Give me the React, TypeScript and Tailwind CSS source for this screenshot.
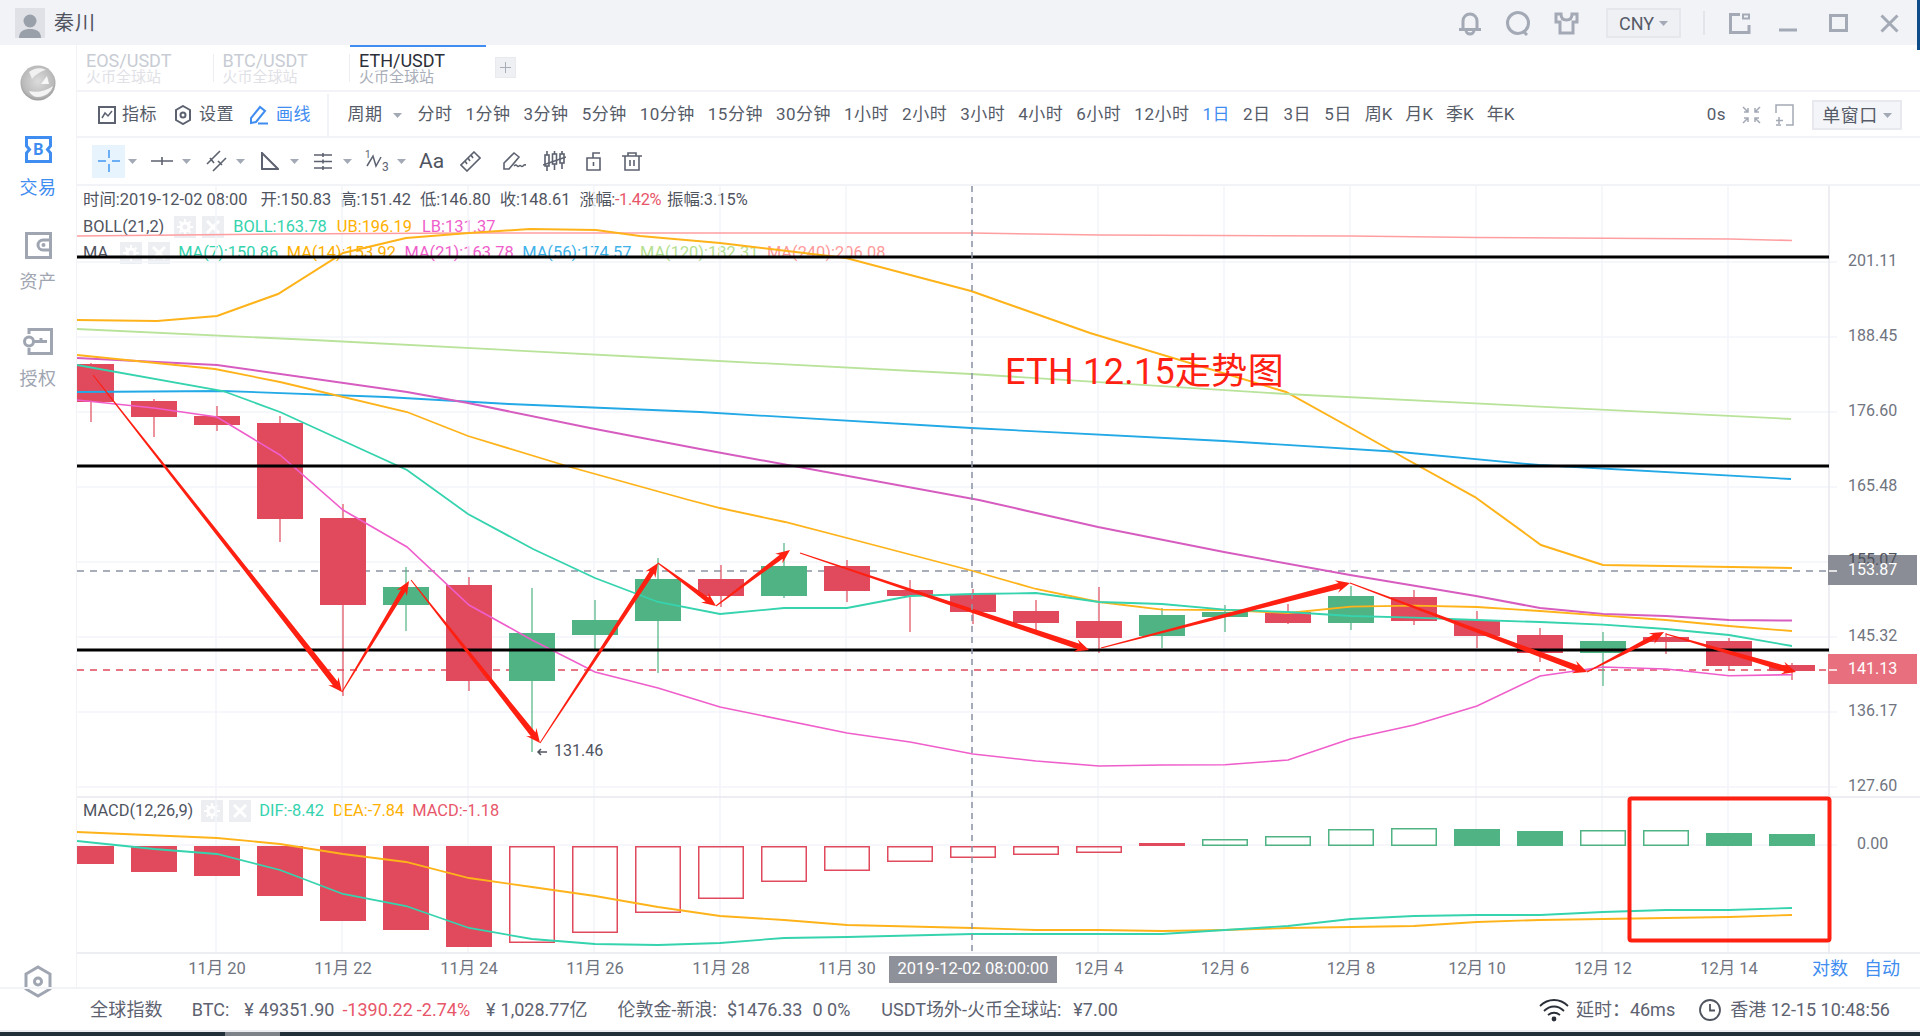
import type { ReactNode } from 'react'

const RED = '#e04a5c'
const GREEN = '#50b383'
const MARK = '#ff2012'

const cx = (i: number) => 91 + 63 * i

// [bodyTop, bodyBottom, wickTop, wickBottom, up]
const CANDLES: [number, number, number, number, boolean][] = [
  [364, 402, 363, 422, false], [401, 417, 399, 437, false], [416, 425, 406, 431, false],
  [423, 519, 416, 542, false], [518, 605, 504, 696, false], [587, 605, 567, 631, true],
  [585, 681, 577, 691, false], [633, 681, 588, 752, true], [620, 635, 600, 650, true],
  [579, 621, 558, 673, true], [579, 596, 565, 607, false], [566, 596, 543, 598, true],
  [566, 591, 560, 602, false], [590, 596, 580, 632, false], [594, 612, 589, 624, false],
  [611, 623, 600, 630, false], [621, 638, 587, 653, false], [615, 636, 608, 648, true],
  [612, 617, 605, 632, true], [612, 623, 604, 624, false], [596, 623, 586, 630, true],
  [597, 621, 590, 625, false], [620, 636, 611, 648, false], [635, 653, 628, 662, false],
  [641, 653, 632, 686, true], [637, 642, 633, 654, false], [641, 666, 638, 670, false],
  [665, 671, 663, 680, false],
]

// [bottom or top edge, filled]; the bars grow from the zero line
const MACD: [number, boolean][] = [
  [864, true], [872, true], [876, true], [896, true], [921, true], [930, true], [947, true],
  [943, false], [933, false], [913, false], [899, false], [882, false], [871, false], [862, false],
  [858, false], [855, false], [853, false], [843, true], [839, false], [836, false], [829, false],
  [828, false], [829, true], [831, true], [830, false], [830, false], [833, true], [834, true],
]

const ZERO = 846

type Series = { color: string; width: number; pts: number[][] }

const LINES: Series[] = [
  { color: '#ff9ea0', width: 1.6, pts: [[77, 236], [280, 234], [469, 233], [800, 233], [972, 233], [1100, 235], [1350, 236], [1476, 237.5], [1730, 239], [1792, 240.5]] },
  { color: '#ffb31a', width: 2, pts: [[77, 320], [157, 321], [217, 316], [278, 294], [343, 253], [406, 238], [469, 233], [530, 229], [596, 230], [640, 236], [720, 243], [846, 258], [971, 291], [1090, 333], [1286, 392], [1351, 428], [1408, 460], [1475, 497], [1541, 545], [1603, 565], [1792, 568]] },
  { color: '#b9e39a', width: 1.8, pts: [[77, 329], [313, 340], [700, 360], [971, 374], [1286, 394], [1791, 419]] },
  { color: '#22a9e6', width: 1.8, pts: [[77, 392], [223, 391], [386, 397], [509, 404], [700, 412], [971, 428], [1224, 441], [1400, 452], [1539, 465], [1791, 479]] },
  { color: '#d65cc0', width: 2, pts: [[77, 358], [217, 365], [407, 392], [468, 403], [590, 428], [700, 449], [979, 500], [1098, 527], [1224, 552], [1350, 575], [1476, 596], [1540, 608], [1603, 614], [1666, 616], [1729, 620], [1792, 620.5]] },
  { color: '#ffb31a', width: 1.8, pts: [[77, 355], [215, 369], [280, 382], [407, 412], [468, 436], [570, 467], [689, 500], [720, 508], [785, 522], [847, 538], [973, 571], [1036, 589], [1099, 602], [1162, 609.7], [1225, 610], [1288, 613], [1351, 606.7], [1414, 605.7], [1477, 607], [1540, 611], [1603, 615.7], [1666, 620], [1729, 626], [1792, 631]] },
  { color: '#35d3ae', width: 1.8, pts: [[77, 365], [223, 391], [280, 412], [407, 470], [468, 514], [533, 549], [595, 578], [658, 602], [720, 614], [784, 608], [847, 608], [910, 596], [973, 594], [1036, 593], [1099, 602], [1162, 604], [1225, 609.7], [1288, 612], [1351, 616], [1414, 617.7], [1477, 620], [1540, 622], [1603, 624.7], [1666, 629], [1729, 635], [1792, 646]] },
  { color: '#ef5ecb', width: 1.6, pts: [[77, 400], [154, 408], [217, 417], [280, 455], [343, 510], [407, 547], [469, 605], [532, 640], [595, 672], [658, 688], [720, 707], [847, 733], [910, 742], [973, 754], [1036, 761], [1099, 766], [1162, 765], [1225, 764.7], [1288, 760], [1350, 739], [1414, 725], [1477, 706], [1540, 676], [1603, 667], [1666, 669], [1729, 675.7], [1792, 674.7]] },
  { color: '#ffb31a', width: 1.8, pts: [[77, 832], [217, 838], [280, 844], [343, 854], [406, 862], [469, 878], [532, 887], [595, 896], [658, 907], [720, 916], [784, 920], [847, 925], [973, 928], [1036, 930], [1099, 930], [1162, 931], [1225, 930], [1288, 928], [1351, 927], [1414, 926], [1477, 922], [1540, 920], [1603, 919], [1729, 917], [1792, 915]] },
  { color: '#35d3ae', width: 1.8, pts: [[77, 841], [154, 849], [217, 854], [280, 870], [343, 894], [406, 906], [469, 928], [532, 939], [595, 944], [658, 945], [720, 943], [784, 938], [847, 937], [973, 934], [1036, 934], [1099, 934], [1162, 934], [1225, 930], [1288, 926], [1351, 919], [1414, 916], [1477, 915], [1540, 915], [1603, 912], [1666, 910], [1729, 910], [1792, 908]] },
]

// hand drawn wave marks: [x1, y1, x2, y2, shaft width at the head]
const ARROWS: number[][] = [
  [93, 375, 342, 692, 6], [342, 692, 409, 581, 5], [411, 580, 540, 743, 6], [540, 743, 658, 563, 5],
  [658, 563, 716, 606, 5], [716, 606, 790, 550, 5], [800, 553, 1089, 650, 6], [1101, 648, 1350, 583, 6],
  [1350, 583, 1587, 672, 6], [1587, 672, 1664, 632, 5], [1666, 634, 1796, 672, 6],
]

const PRICE_TICKS: [string, number][] = [
  ['201.11', 262], ['188.45', 337], ['176.60', 412], ['165.48', 487],
  ['145.32', 637], ['136.17', 712], ['127.60', 787],
]

const DATE_TICKS: [string, number][] = [
  ['11月 20', 217], ['11月 22', 343], ['11月 24', 469], ['11月 26', 595], ['11月 28', 721], ['11月 30', 847],
  ['12月 2', 973], ['12月 4', 1099], ['12月 6', 1225], ['12月 8', 1351], ['12月 10', 1477], ['12月 12', 1603], ['12月 14', 1729],
]

const PERIODS = ['分时', '1分钟', '3分钟', '5分钟', '10分钟', '15分钟', '30分钟', '1小时', '2小时', '3小时', '4小时', '6小时', '12小时']

function arrowPoints([x1, y1, x2, y2, w]: number[]) {
  const len = Math.hypot(x2 - x1, y2 - y1)
  const dx = (x2 - x1) / len
  const dy = (y2 - y1) / len
  const at = (along: number, side: number) =>
    `${x1 + dx * along - dy * side},${y1 + dy * along + dx * side}`
  const neck = len - 11
  return [
    at(0, -0.5), at(neck, -w / 2), at(len - 14, -w / 2 - 3.5), at(len, 0),
    at(len - 14, w / 2 + 3.5), at(neck, w / 2), at(0, 0.5),
  ].join(' ')
}

function Caret({ className = 'fill-[#a3a9b5]' }: { className?: string }) {
  return (
    <svg width="9" height="5" viewBox="0 0 9 5" className={`shrink-0 ${className}`}>
      <path d="M0 0h9L4.500 5z" />
    </svg>
  )
}

function Avatar() {
  return (
    <div className="ml-[15px] h-[30px] w-[30px] overflow-hidden bg-[#dfe1e6]">
      <svg viewBox="0 0 30 30" className="h-full w-full fill-[#9aa0aa]">
        <circle cx="15" cy="13" r="6.5" />
        <path d="M4 30c0-7 5-9 11-9s11 2 11 9z" />
      </svg>
    </div>
  )
}

function TitleBar() {
  const s = 'fill-none stroke-[#a3a9b5] stroke-[3]'
  return (
    <header className="flex h-[45px] shrink-0 items-center bg-[#f2f3f7]">
      <Avatar />
      <span className="ml-[9px] text-[20px] tracking-[1px] text-[#50545f]">秦川</span>
      <div className="ml-auto flex items-center pt-[1px]">
        <svg width="24" height="25" viewBox="0 0 24 25" className={s}>
          <path d="M5 18V10a7 7 0 0 1 14 0v8M1 18.5h22M8 19a4 4 0 0 0 8 0" />
        </svg>
        <svg width="25" height="25" viewBox="0 0 25 25" className={`ml-[24px] ${s}`}>
          <circle cx="12" cy="12" r="10.5" />
          <path d="M17 20l4 4" />
        </svg>
        <svg width="25" height="23" viewBox="0 0 25 23" className={`ml-[23px] ${s}`}>
          <path d="M7 2H2v8h4v11h13V10h4V2h-5c0 4-2 6-5.500 6S7 6 7 2z" />
        </svg>
        <div className="ml-[27px] flex h-[30px] w-[75px] items-center justify-center gap-[5px] border-2 border-[#e5e7ec] bg-[#eef0f4] text-[18px] text-[#565b68]">
          CNY
          <Caret />
        </div>
        <div className="ml-[22px] h-[24px] w-[2px] bg-[#e3e5ea]" />
        <svg width="22" height="21" viewBox="0 0 22 21" className={`ml-[24px] ${s}`}>
          <path d="M20 12v7.500H1.500v-18H11" />
          <rect x="14" y="1.500" width="6" height="4" className="stroke-2" />
        </svg>
        <svg width="18" height="18" viewBox="0 0 18 18" className={`ml-[28px] ${s}`}>
          <path d="M0 16h18" />
        </svg>
        <svg width="19" height="18" viewBox="0 0 19 18" className={`ml-[32px] ${s}`}>
          <rect x="1.500" y="1.500" width="16" height="15" />
        </svg>
        <svg width="19" height="19" viewBox="0 0 19 19" className={`ml-[32px] mr-[21px] ${s}`}>
          <path d="M1.500 1.500l16 16M17.500 1.500l-16 16" />
        </svg>
      </div>
    </header>
  )
}

function Sidebar() {
  const gray = 'fill-none stroke-[#9fa5b1]'
  return (
    <aside className="flex w-[76px] shrink-0 flex-col items-center text-[18px] leading-[24px] tracking-[0.5px]">
      <svg width="36" height="36" viewBox="0 0 36 36" className="mt-[20px]">
        <defs>
          <radialGradient id="globe" cx="0.5" cy="0.45" r="0.6">
            <stop offset="0" stopColor="#dcdcdc" />
            <stop offset="0.75" stopColor="#b9b9b9" />
            <stop offset="1" stopColor="#8a8a8a" />
          </radialGradient>
        </defs>
        <circle cx="18" cy="18" r="17.500" fill="url(#globe)" />
        <path d="M9 7c5-4 12-5 17-2-5 1-11 5-14 9-1-3-2-5-3-7z" fill="#f1f1f1" />
        <path d="M9 26c8 2 17 0 24-5-2 7-9 11-15 11-4 0-7-2-9-6z" fill="#f4f4f4" />
        <path d="M21 19l6-8 2 8z" fill="#f8f8f8" />
      </svg>
      <svg width="27" height="27" viewBox="0 0 27 27" className="mt-[35px] fill-none stroke-[#3f8df0] stroke-[3]">
        <path d="M1.500 10V1.500h24V10l-3 3.500 3 3.500v8.500h-24V17l3-3.500-3-3.500z" />
        <text x="13.500" y="19" textAnchor="middle" className="fill-[#3f8df0] stroke-none text-[16px] font-bold">B</text>
      </svg>
      <span className="mt-[13px] text-[#3f8df0]">交易</span>
      <svg width="27" height="27" viewBox="0 0 27 27" className={`mt-[32px] stroke-[3] ${gray}`}>
        <path d="M1.500 1.500h24v24h-24z" />
        <path d="M25 8H18a5 5 0 0 0 0 10h7" />
        <circle cx="18.500" cy="13" r="1" className="stroke-2" />
      </svg>
      <span className="mt-[11px] text-[#9fa5b1]">资产</span>
      <svg width="30" height="27" viewBox="0 0 30 27" className={`mt-[34px] stroke-[3] ${gray}`}>
        <path d="M6 6V1.500h22.500v24H6V20" />
        <circle cx="6" cy="13.500" r="4.500" />
        <path d="M10.500 13.500H24M18 13.500V10" />
      </svg>
      <span className="mt-[12px] text-[#9fa5b1]">授权</span>
      <svg width="28" height="33" viewBox="0 0 28 33" className={`mb-[-11px] mt-auto stroke-[3] ${gray}`}>
        <path d="M14 2l12 7v15l-12 7-12-7V9z" />
        <circle cx="14" cy="16.500" r="3.500" />
      </svg>
    </aside>
  )
}

function Tab({ name, active }: { name: string; active?: boolean }) {
  return (
    <div className="relative flex h-full w-[135.500px] flex-col justify-center pl-[9px] leading-[16px]">
      {active && <div className="absolute -top-0 left-0 h-[2px] w-full bg-[#3f8df0]" />}
      <span className={`pt-[2px] text-[18px] ${active ? 'text-[#2b2f39]' : 'text-[#c8ccd4]'}`}>{name}</span>
      <span className={`text-[15px] ${active ? 'text-[#a8adb8]' : 'text-[#dfe1e6]'}`}>火币全球站</span>
    </div>
  )
}

function Tabs() {
  const sep = 'h-[28px] w-px bg-[#eceef2]'
  return (
    <div className="flex h-[45px] shrink-0 items-center">
      <Tab name="EOS/USDT" />
      <div className={sep} />
      <Tab name="BTC/USDT" />
      <div className={sep} />
      <Tab name="ETH/USDT" active />
      <div className="ml-[9px] flex h-[21px] w-[21px] items-center justify-center border border-[#e8eaee] bg-[#eef0f4]">
        <svg width="11" height="11" viewBox="0 0 11 11" className="stroke-[#a8adb8]">
          <path d="M5.500 0v11M0 5.500h11" />
        </svg>
      </div>
    </div>
  )
}

function PeriodBar() {
  const ink = 'fill-none stroke-[#5d6270] stroke-2'
  return (
    <div className="flex h-[44px] shrink-0 items-center pt-[2px] text-[17px] tracking-[0.5px] text-[#565b68]">
      <div className="flex h-full w-[251.500px] items-center border-r-2 border-[#f2f3f7] pl-[21px]">
        <svg width="18" height="18" viewBox="0 0 18 18" className={ink}>
          <rect x="1" y="1" width="16" height="16" />
          <path d="M4 12l3-5 3 3 4-5" className="stroke-[1.500]" />
        </svg>
        <span className="ml-[6px]">指标</span>
        <svg width="18" height="20" viewBox="0 0 18 20" className={`ml-[17px] ${ink}`}>
          <path d="M9 1l7 4v10l-7 4-7-4V5z" />
          <circle cx="9" cy="10" r="2.500" />
        </svg>
        <span className="ml-[7px]">设置</span>
        <svg width="19" height="20" viewBox="0 0 19 20" className="ml-[16px] fill-none stroke-[#3f8df0] stroke-2">
          <path d="M1 18v-5L10 2l5 4-9 11zM8 18.500h10" />
        </svg>
        <span className="ml-[7px] text-[#3f8df0]">画线</span>
      </div>
      <div className="ml-[19px] flex items-center">
        周期
        <span className="ml-[10px] mr-[16px]">
          <Caret />
        </span>
      </div>
      <div className="flex items-center gap-[13px]">
        {PERIODS.map((p) => (
          <span key={p}>{p}</span>
        ))}
        <span className="text-[#3f8df0]">1日</span>
        <span>2日</span>
        <span>3日</span>
        <span>5日</span>
        <span className="tracking-normal">周K</span>
        <span className="tracking-normal">月K</span>
        <span className="tracking-normal">季K</span>
        <span className="tracking-normal">年K</span>
      </div>
      <div className="ml-auto flex items-center">
        <span>0s</span>
        <svg width="19" height="18" viewBox="0 0 19 18" className="ml-[16px] fill-none stroke-[#a3a9b5] stroke-[1.500]">
          <path d="M1 1l5 5M6 2v4H2M18 1l-5 5M13 2v4h4M1 17l5-5M6 16v-4H2M18 17l-5-5M13 16v-4h4" />
        </svg>
        <svg width="19" height="22" viewBox="0 0 19 22" className="ml-[14px] fill-none stroke-[#a3a9b5] stroke-[1.500]">
          <path d="M1 9V1h17v20h-7M1 21h5M4 13v7M1 16.500h7" />
        </svg>
        <div className="ml-[18px] mr-[18px] flex h-[30px] w-[90px] items-center justify-center gap-[5px] border-2 border-[#e7e9ee] bg-[#f4f5f8] text-[18px] text-[#565b68]">
          单窗口
          <Caret />
        </div>
      </div>
    </div>
  )
}

function Tool({ className, children, caret }: { className: string; children: ReactNode; caret?: string }) {
  return (
    <>
      <div className={`flex items-center justify-center ${className}`}>{children}</div>
      {caret && (
        <span className={caret}>
          <Caret />
        </span>
      )}
    </>
  )
}

function DrawBar() {
  const ink = 'fill-none stroke-[#5d6270] stroke-[1.600]'
  return (
    <div className="flex h-[46px] shrink-0 items-center pl-[15px]">
      <Tool className="h-[33px] w-[33px] bg-[#e7f3fd]" caret="ml-[3px]">
        <svg width="22" height="22" viewBox="0 0 22 22" className="stroke-[#6aaef5] stroke-2">
          <path d="M11 0v8M11 14v8M0 11h8M14 11h8" />
        </svg>
      </Tool>
      <Tool className="ml-[14px] w-[22px]" caret="ml-[9px]">
        <svg width="22" height="8" viewBox="0 0 22 8" className={ink}>
          <path d="M0 4h22M11 0v8" />
        </svg>
      </Tool>
      <Tool className="ml-[15px] w-[22px]" caret="ml-[8px]">
        <svg width="22" height="22" viewBox="0 0 22 22" className={ink}>
          <path d="M1 14L14 1M7 21L20 8M4 8l4 5M12 11l4 4" />
        </svg>
      </Tool>
      <Tool className="ml-[15px] w-[20px]" caret="ml-[10px]">
        <svg width="18" height="18" viewBox="0 0 18 18" className="fill-none stroke-[#5d6270] stroke-2">
          <path d="M1 1v16h16z" />
        </svg>
      </Tool>
      <Tool className="ml-[15px] w-[18px]" caret="ml-[11px]">
        <svg width="18" height="17" viewBox="0 0 18 17" className={ink}>
          <path d="M0 2h18M0 8.500h18M0 15h18M9 0v4M9 6.500v4M9 13v4" />
        </svg>
      </Tool>
      <Tool className="ml-[13px] w-[24px]" caret="ml-[8px]">
        <svg width="24" height="24" viewBox="0 0 24 24" className="fill-none stroke-[#5d6270] stroke-[1.500]">
          <path d="M2 17L8 7l3 10 5-9" />
          <text x="0" y="9" className="fill-[#5d6270] stroke-none text-[10px]">1</text>
          <text x="17" y="22" className="fill-[#5d6270] stroke-none text-[12px]">3</text>
        </svg>
      </Tool>
      <span className="ml-[13px] w-[24px] text-[21px] leading-none text-[#50545f]">Aa</span>
      <Tool className="ml-[17px] w-[21px]">
        <svg width="21" height="21" viewBox="0 0 21 21" className={ink}>
          <path d="M14 1l6 6L7 20l-6-6zM11 4l2 3M8 7l2 3M5 10l2 3" />
        </svg>
      </Tool>
      <Tool className="ml-[22px] w-[24px]">
        <svg width="24" height="20" viewBox="0 0 24 20" className={ink}>
          <path d="M1 18v-6L11 2l5 4L6 18zM11 15c3-3 3 2 5 0s2 2 4 0 2-1 3-1" />
        </svg>
      </Tool>
      <Tool className="ml-[16px] w-[23px]">
        <svg width="23" height="20" viewBox="0 0 23 20" className={ink}>
          <path d="M0 14l23-8M4 0v4M4 15v5M11.500 0v3M11.500 13v6M19 0v3M19 12v6" />
          <rect x="2" y="4" width="4" height="11" />
          <rect x="9.500" y="3" width="4" height="10" />
          <rect x="17" y="3" width="4" height="9" />
        </svg>
      </Tool>
      <Tool className="ml-[20px] w-[15px]">
        <svg width="15" height="19" viewBox="0 0 15 19" className={ink}>
          <path d="M1 6h13v12H1zM7 6V1h7M7.500 10v4" />
        </svg>
      </Tool>
      <Tool className="ml-[21px] w-[20px]">
        <svg width="20" height="19" viewBox="0 0 20 19" className={ink}>
          <path d="M0 4h20M6 4V1h8v3M3 4v14h14V4M8 8v6M12 8v6" />
        </svg>
      </Tool>
    </div>
  )
}

function IconPair() {
  const box = 'flex h-[22px] w-[22px] items-center justify-center bg-[#eceef2]'
  return (
    <span className="flex gap-[6px]">
      <span className={box}>
        <svg width="16" height="16" viewBox="0 0 16 16" className="fill-none stroke-white stroke-[3]">
          <circle cx="8" cy="8" r="4" />
          <path d="M8 0v3M8 13v3M0 8h3M13 8h3M2.500 2.500l2 2M11.500 11.500l2 2M2.500 13.500l2-2M11.500 4.500l2-2" className="stroke-2" />
        </svg>
      </span>
      <span className={box}>
        <svg width="14" height="14" viewBox="0 0 14 14" className="stroke-white stroke-[3]">
          <path d="M1 1l12 12M13 1L1 13" />
        </svg>
      </span>
    </span>
  )
}

function Legends() {
  return (
    <>
      <div className="absolute left-[6px] top-[4px] flex h-[20px] items-center gap-[9px] whitespace-nowrap text-[16.400px] leading-none text-[#50545f]">
        <span className="mr-[4px]">时间:2019-12-02 08:00</span>
        <span>开:150.83</span>
        <span>高:151.42</span>
        <span>低:146.80</span>
        <span>收:148.61</span>
        <span className="mr-[-3px] tracking-[-0.4px]">
          涨幅:<span className="text-[#e8566a]">-1.42%</span>
        </span>
        <span>振幅:3.15%</span>
      </div>
      <div className="absolute left-[6px] top-[30px] flex h-[22px] items-center whitespace-nowrap text-[16.400px] leading-none">
        <span className="text-[#50545f]">BOLL(21,2)</span>
        <span className="ml-[10px] mr-[9px]">
          <IconPair />
        </span>
        <span className="text-[#35d3ae]">BOLL:163.78</span>
        <span className="ml-[10px] text-[#ffb000]">UB:196.19</span>
        <span className="ml-[10px] text-[#ef5ecb]">LB:131.37</span>
      </div>
      <div className="absolute left-[6px] top-[56px] flex h-[22px] items-center gap-[8.500px] whitespace-nowrap text-[16.400px] leading-none">
        <span className="mr-[3px] text-[#50545f]">MA</span>
        <IconPair />
        <span className="text-[#35d3ae]">MA(7):150.86</span>
        <span className="text-[#ffb000]">MA(14):153.92</span>
        <span className="text-[#ef5ecb]">MA(21):163.78</span>
        <span className="text-[#3fb2ea]">MA(56):174.57</span>
        <span className="text-[#b5e08f]">MA(120):182.31</span>
        <span className="text-[#ff9a9a]">MA(240):206.08</span>
      </div>
      <div className="absolute left-[6px] top-[614px] flex h-[22px] items-center whitespace-nowrap text-[16.400px] leading-none">
        <span className="text-[#50545f]">MACD(12,26,9)</span>
        <span className="ml-[8px] mr-[8px]">
          <IconPair />
        </span>
        <span className="text-[#35d3ae]">DIF:-8.42</span>
        <span className="ml-[9px] text-[#ffb000]">DEA:-7.84</span>
        <span className="ml-[8px] text-[#e8566a]">MACD:-1.18</span>
      </div>
    </>
  )
}

function Chart() {
  const text = 'fill-[#6f7480] text-[16px]'
  const dateText = 'fill-[#6f7480] text-[16.500px]'
  return (
    <div className="relative h-[801px] overflow-hidden">
      <Legends />
      <svg width="1843" height="801" viewBox="77 186 1843 801" className="absolute left-0 top-0">
        {/* grid */}
        {DATE_TICKS.map(([, x]) => (
          <line key={x} x1={x - 1} x2={x - 1} y1="186" y2="953" stroke="#f2f5fa" strokeWidth="1.500" />
        ))}
        {[...PRICE_TICKS.map(([, y]) => y), 562, 845].map((y) => (
          <line key={y} x1="77" x2="1837" y1={y} y2={y} stroke="#f2f5fa" strokeWidth="1.500" />
        ))}
        <line x1="77" x2="1920" y1="797" y2="797" stroke="#e7e9ee" strokeWidth="1.500" />
        <line x1="77" x2="1920" y1="953" y2="953" stroke="#e7e9ee" strokeWidth="1.500" />
        <line x1="1829" x2="1829" y1="186" y2="953" stroke="#e7e9ee" strokeWidth="1.500" />
        <line x1="77" x2="1837" y1="571" y2="571" stroke="#8a93a3" strokeWidth="1.500" strokeDasharray="7 6" />
        <line x1="77" x2="1837" y1="670" y2="670" stroke={RED} strokeWidth="1.500" strokeDasharray="7 6" />

        {/* candles */}
        {CANDLES.map(([top, bottom, hi, lo, up], i) => {
          const color = up ? GREEN : RED
          const x = cx(i)
          const left = Math.max(x - 23, 77)
          return (
            <g key={i} fill={color} stroke={color}>
              <line x1={x} x2={x} y1={hi} y2={lo} strokeWidth="1.200" />
              <rect x={left} y={top} width={x + 23 - left} height={bottom - top} stroke="none" />
            </g>
          )
        })}

        {/* macd histogram */}
        {MACD.map(([edge, filled], i) => {
          const color = i < 18 ? RED : GREEN
          const x = cx(i)
          const left = Math.max(x - 23, 77)
          const top = Math.min(edge, ZERO)
          const height = Math.abs(edge - ZERO)
          return filled ? (
            <rect key={i} x={left} y={top} width={x + 23 - left} height={height} fill={color} />
          ) : (
            <rect key={i} x={left + 0.75} y={top + 0.75} width={x + 23 - left - 1.500} height={height - 1.500} fill="none" stroke={color} strokeWidth="1.500" />
          )
        })}

        {LINES.map((l, i) => (
          <polyline key={i} points={l.pts.map((p) => p.join(',')).join(' ')} fill="none" stroke={l.color} strokeWidth={l.width} />
        ))}

        {/* support and resistance drawn on top */}
        {[257, 466, 650].map((y) => (
          <rect key={y} x="77" y={y - 1.500} width="1752" height="3" fill="#000" />
        ))}
        {ARROWS.map((a, i) => (
          <polygon key={i} points={arrowPoints(a)} fill={MARK} />
        ))}
        <text x="1005" y="384" fill={MARK} className="text-[36px] tracking-[0.3px]">ETH 12.15走势图</text>
        <path d="M547 752h-9m3-3l-3 3 3 3" fill="none" stroke="#50545f" strokeWidth="1.500" />
        <text x="554" y="756" className="fill-[#50545f] text-[16px]">131.46</text>

        <line x1="972" x2="972" y1="186" y2="953" stroke="#8a93a3" strokeWidth="1.500" strokeDasharray="6 5" />
        <rect x="1629.5" y="798.5" width="200" height="142" rx="2" fill="none" stroke={MARK} strokeWidth="4" />

        {/* price axis */}
        <rect x="1828" y="555" width="89" height="30" fill="#8a8d96" />
        <rect x="1828" y="654" width="89" height="30" fill="#e8707e" />
        {PRICE_TICKS.map(([label, y]) => (
          <text key={label} x="1848" y={y + 4} className={text}>{label}</text>
        ))}
        <text x="1848" y="565" className="fill-[#50545f] text-[16px]">155.07</text>
        <text x="1857" y="849" className={text}>0.00</text>
        <text x="1848" y="575" className="fill-white text-[16px]">153.87</text>
        <text x="1848" y="674" className="fill-white text-[16px]">141.13</text>
        <line x1="1829" x2="1837" y1="571" y2="571" stroke="#fff" strokeWidth="1.500" />
        <line x1="1829" x2="1837" y1="670" y2="670" stroke="#fff" strokeWidth="1.500" />

        {/* time axis */}
        {DATE_TICKS.map(([label, x]) => (
          <text key={label} x={x} y="973.500" textAnchor="middle" className={dateText}>{label}</text>
        ))}
        <rect x="889" y="956" width="168" height="27" fill="#8a8d96" fillOpacity="0.96" />
        <text x="973" y="973.500" textAnchor="middle" className="fill-white text-[16.500px]">2019-12-02 08:00:00</text>
        <text x="1812" y="975" className="fill-[#3f8df0] text-[18px]">对数</text>
        <text x="1864" y="975" className="fill-[#3f8df0] text-[18px]">自动</text>
      </svg>
    </div>
  )
}

function StatusBar() {
  return (
    <footer className="flex h-[41px] shrink-0 items-center text-[18px] text-[#5d6270]">
      <span className="ml-[90px] tracking-[0.2px]">全球指数</span>
      <span className="ml-[29px]">BTC:</span>
      <span className="ml-[15px]">
        <span className="mr-[5px]">¥</span>49351.90
      </span>
      <span className="ml-[8px] text-[#e8566a]">-1390.22</span>
      <span className="ml-[4px] text-[#e8566a]">-2.74%</span>
      <span className="ml-[16px]">
        <span className="mr-[5px]">¥</span>1,028.77亿
      </span>
      <span className="ml-[30px]">伦敦金-新浪:</span>
      <span className="ml-[10px]">$1476.33</span>
      <span className="ml-[10px]">0 0%</span>
      <span className="ml-[31px]">USDT场外-火币全球站:</span>
      <span className="ml-[12px]">¥7.00</span>
      <div className="ml-auto flex items-center">
        <svg width="30" height="24" viewBox="0 0 30 24" className="fill-none stroke-[#2b2f39] stroke-[1.800]">
          <path d="M1 8c8-8 20-8 28 0M5 13c6-6 14-6 20 0M9 17c4-3 8-3 12 0" />
          <circle cx="15" cy="21" r="1.500" className="fill-[#2b2f39]" />
        </svg>
        <span className="ml-[7px]">延时：46ms</span>
        <svg width="22" height="22" viewBox="0 0 22 22" className="ml-[24px] fill-none stroke-[#50545f] stroke-[1.800]">
          <circle cx="11" cy="11" r="10" />
          <path d="M11 5v6.500h5" />
        </svg>
        <span className="ml-[9px] mr-[30px]">香港 12-15 10:48:56</span>
      </div>
    </footer>
  )
}

export default function App() {
  return (
    <div className="relative flex h-[1036px] w-[1920px] flex-col overflow-hidden bg-white font-[family-name:Roboto,'Noto_Sans_CJK_SC',sans-serif]">
      <TitleBar />
      <div className="flex h-[942px] shrink-0">
        <Sidebar />
        <main className="flex min-w-0 flex-1 flex-col gap-[2px] border-l border-[#f2f3f7] bg-[#f2f3f7]">
          <div className="bg-white">
            <Tabs />
          </div>
          <div className="bg-white">
            <PeriodBar />
          </div>
          <div className="bg-white">
            <DrawBar />
          </div>
          <div className="bg-white">
            <Chart />
          </div>
        </main>
      </div>
      <div className="h-[2px] shrink-0 bg-[#f2f3f7]" />
      <StatusBar />
      <div className="flex h-[6px] shrink-0 flex-col">
        <div className="h-[2px] bg-[#eceef2]" />
        <div className="flex h-[4px] bg-[#22303a]">
          <div className="ml-[225px] w-[55px] bg-[#7d8388]" />
        </div>
      </div>
      <div className="absolute right-0 top-0 h-[50px] w-[3px] bg-[#0f4c8a]" />
    </div>
  )
}
